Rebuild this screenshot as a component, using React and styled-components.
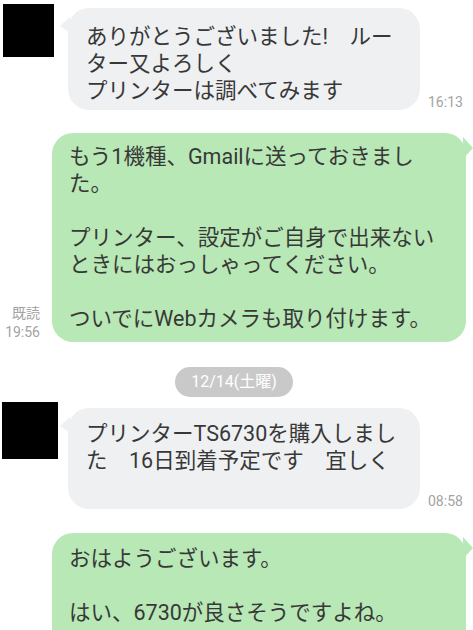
import React from "react";
import styled, { createGlobalStyle } from "styled-components";

const Global = createGlobalStyle`
  html, body { margin: 0; padding: 0; background: #ffffff; }
  body { font-family: Roboto, "Noto Sans CJK JP", sans-serif; }
`;

const Page = styled.div`
  width: 473px;
  height: 630px;
  overflow: hidden;
  display: flex;
  flex-direction: column;
  background: #ffffff;
`;

const IncomingRow = styled.div`
  display: grid;
  grid-template-columns: 68px 352px auto;
  align-items: start;
  margin-top: ${(p) => p.$top || 0}px;
`;

const Avatar = styled.div`
  width: ${(p) => p.$w}px;
  height: ${(p) => p.$h}px;
  margin-left: ${(p) => p.$left}px;
  margin-top: ${(p) => p.$offset}px;
  background: #000000;
`;

const Bubble = styled.div`
  position: relative;
  box-sizing: border-box;
  width: ${(p) => p.$w}px;
  margin-top: ${(p) => p.$offset || 0}px;
  padding: ${(p) => p.$padTop || 10}px 17px ${(p) => p.$padBottom || 10}px
    ${(p) => p.$padLeft}px;
  border-radius: 21px;
  background: ${(p) => (p.$mine ? "#b8e8b5" : "#eff0f2")};
  color: #383838;
  font-size: 21.5px;
  line-height: 27px;
`;

const TailLeft = styled.span`
  position: absolute;
  left: -8px;
  top: 9px;
  width: 10px;
  height: 16px;
  background: #eff0f2;
  clip-path: polygon(100% 0, 0 56%, 100% 100%);
`;

const TailRight = styled.span`
  position: absolute;
  right: -7px;
  top: 4px;
  width: 10px;
  height: 22px;
  background: #b8e8b5;
  clip-path: polygon(0 0, 100% 50%, 0 100%);
`;

const Line = styled.div`
  white-space: pre;
  min-height: 27px;
`;

const Time = styled.div`
  align-self: end;
  margin-left: 8px;
  font-size: 14px;
  line-height: 16px;
  color: #a3a3a3;
`;

const OutgoingRow = styled.div`
  display: flex;
  justify-content: flex-end;
  align-items: flex-end;
  padding-right: 7px;
  margin-top: ${(p) => p.$top || 0}px;
`;

const ReadInfo = styled.div`
  margin-right: 12px;
  text-align: right;
  font-size: 14px;
  line-height: 19px;
  color: #a3a3a3;
`;

const DateRow = styled.div`
  display: flex;
  justify-content: center;
  padding-right: 5px;
  margin-top: ${(p) => p.$top || 0}px;
`;

const DatePill = styled.div`
  width: 118px;
  height: 30px;
  border-radius: 15px;
  background: #c9c9c9;
  color: #ffffff;
  font-size: 16px;
  line-height: 30px;
  text-align: center;
`;

const Lines = ({ lines }) =>
  lines.map((l, i) => <Line key={i}>{l}</Line>);

export default function App() {
  return (
    <>
      <Global />
      <Page>
        <IncomingRow>
          <Avatar $w={51} $h={53} $left={3} $offset={4} />
          <Bubble $w={352} $padLeft={18} $offset={8} $padTop={15} $padBottom={6}>
            <TailLeft />
            <Lines
              lines={[
                "ありがとうございました!　ルー",
                "ター又よろしく",
                "プリンターは調べてみます",
              ]}
            />
          </Bubble>
          <Time>16:13</Time>
        </IncomingRow>

        <OutgoingRow $top={23}>
          <ReadInfo>
            <div>既読</div>
            <div>19:56</div>
          </ReadInfo>
          <Bubble $mine $w={414} $padLeft={17}>
            <TailRight />
            <Lines
              lines={[
                "もう1機種、Gmailに送っておきまし",
                "た。",
                "",
                "プリンター、設定がご自身で出来ない",
                "ときにはおっしゃってください。",
                "",
                "ついでにWebカメラも取り付けます。",
              ]}
            />
          </Bubble>
        </OutgoingRow>

        <DateRow $top={25}>
          <DatePill>12/14(土曜)</DatePill>
        </DateRow>

        <IncomingRow $top={5}>
          <Avatar $w={56} $h={57} $left={2} $offset={0} />
          <Bubble $w={352} $padLeft={18} $offset={6} $padTop={12} $padBottom={8}>
            <TailLeft />
            <Lines
              lines={[
                "プリンターTS6730を購入しまし",
                "た　16日到着予定です　宜しく",
                "",
              ]}
            />
          </Bubble>
          <Time>08:58</Time>
        </IncomingRow>

        <OutgoingRow $top={24}>
          <Bubble $mine $w={414} $padLeft={17} $padTop={12}>
            <TailRight />
            <Lines
              lines={["おはようございます。", "", "はい、6730が良さそうですよね。", ""]}
            />
          </Bubble>
        </OutgoingRow>
      </Page>
    </>
  );
}
